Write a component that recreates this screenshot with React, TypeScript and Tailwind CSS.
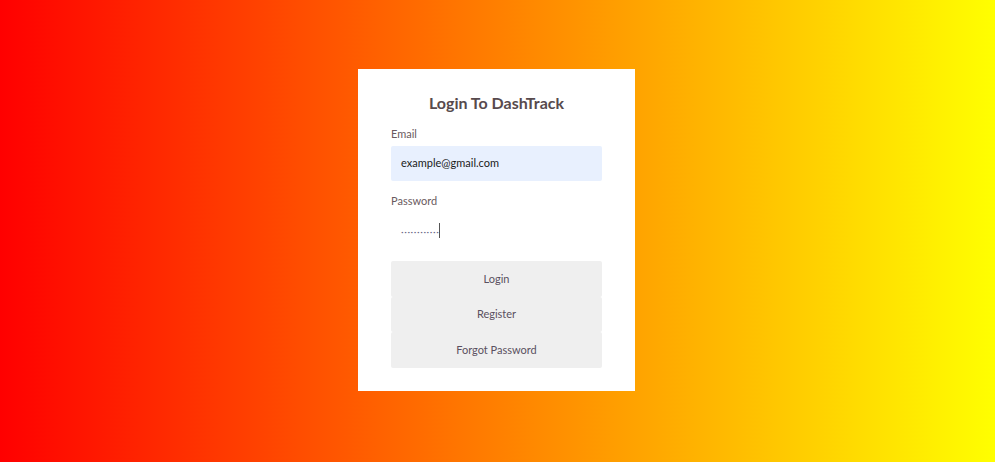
export default function App() {
  return (
    <div
      className="w-[995px] h-[462px] flex items-center justify-center bg-[linear-gradient(to_right,#ff0000,#ffff00)]"
      style={{ fontFamily: "Lato, 'Noto Sans', sans-serif" }}
    >
      <div className="w-[277px] h-[322px] mr-[2px] mb-[2px] bg-white px-[33px] pt-[24px] flex flex-col">
        <h1 className="text-center text-[16px] font-bold text-[#574a4d] leading-[20px]">
          Login To DashTrack
        </h1>
        <label className="mt-[14px] text-[11px] text-[#6a5a5e] leading-[14px]">Email</label>
        <div className="mt-[5px] h-[35px] bg-[#e8f0fe] rounded-[2px] flex items-center px-[10px] text-[11px] text-[#1a1a1a]">
          example@gmail.com
        </div>
        <label className="mt-[13px] text-[11px] text-[#6a5a5e] leading-[14px]">Password</label>
        <div className="mt-[5px] h-[35px] flex items-center px-[10px]">
          <span className="text-[10px] text-[#6a6a88] tracking-[0.6px] leading-none">············</span>
          <span className="w-px h-[15px] bg-[#555]"></span>
        </div>
        <div className="mt-[13px] flex flex-col">
          <button className="h-[36px] bg-[#efefef] rounded-[2px] text-[11px] text-[#5a5060]">Login</button>
          <button className="h-[35px] bg-[#efefef] rounded-[2px] text-[11px] text-[#5a5060]">Register</button>
          <button className="h-[36px] bg-[#efefef] rounded-[2px] text-[11px] text-[#5a5060]">Forgot Password</button>
        </div>
      </div>
    </div>
  );
}
